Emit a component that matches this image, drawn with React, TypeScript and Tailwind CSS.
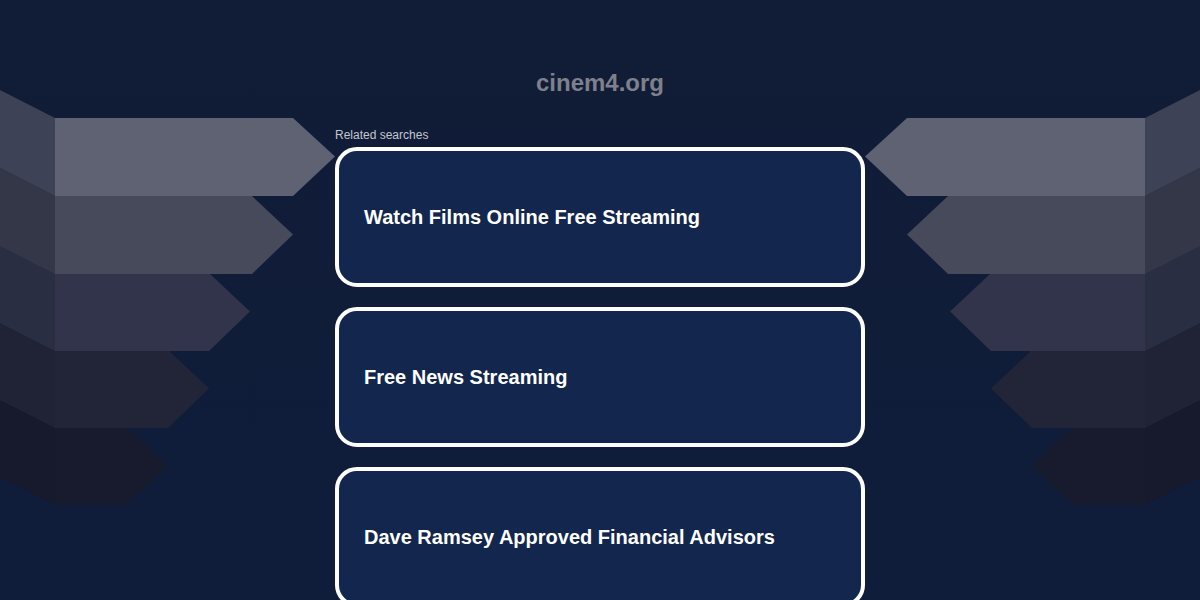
const searches = [
  "Watch Films Online Free Streaming",
  "Free News Streaming",
  "Dave Ramsey Approved Financial Advisors",
];

// arrow bands drawn on the left, mirrored on the right
const bands = [
  { top: 118, rect: 293, tip: 335, fill: "#5f6272", face: "#3e4256" },
  { top: 196, rect: 252, tip: 293, fill: "#474a5b", face: "#333748" },
  { top: 273, rect: 209, tip: 250, fill: "#31344a", face: "#2a2e42" },
  { top: 350, rect: 168, tip: 209, fill: "#222538", face: "#1f2335" },
  { top: 427, rect: 127, tip: 168, fill: "#181b2d", face: "#171a2c" },
];
const H = 77;

function Bands() {
  // draw bottom bands first so each upper band overlaps the seam
  return (
    <g>
      {[...bands].reverse().map((b) => (
        <g key={b.top}>
          <polygon
            points={`0,${b.top - 28} 55,${b.top} 55,${b.top + H + 1} 0,${b.top + H - 27}`}
            fill={b.face}
          />
          <polygon
            points={`55,${b.top} ${b.rect},${b.top} ${b.tip},${b.top + H / 2} ${b.rect},${b.top + H + 1} 55,${b.top + H + 1}`}
            fill={b.fill}
          />
        </g>
      ))}
    </g>
  );
}

function Backdrop() {
  return (
    <svg
      className="absolute inset-0 pointer-events-none"
      width="1200"
      height="600"
      viewBox="0 0 1200 600"
    >
      <defs>
        <linearGradient id="bg" x1="0" y1="0" x2="0" y2="1">
          <stop offset="0" stopColor="#111c36" />
          <stop offset="1" stopColor="#0f1d3b" />
        </linearGradient>
      </defs>
      <rect width="1200" height="600" fill="url(#bg)" />
      <Bands />
      <g transform="translate(1200,0) scale(-1,1)">
        <Bands />
      </g>
    </svg>
  );
}

export default function App() {
  return (
    <div
      className="relative h-[600px] w-full overflow-hidden bg-[#111c36]"
      style={{ fontFamily: '"Liberation Sans", Arial, sans-serif' }}
    >
      <Backdrop />

      <div className="relative flex flex-col items-center pt-[67px]">
        <h1 className="text-2xl font-bold leading-8 text-[#7e818c]">cinem4.org</h1>

        <div className="mt-[28px] w-[530px]">
          <p className="text-xs leading-4 text-[#c3c6cd]">Related searches</p>
          <div className="mt-1 flex flex-col gap-5">
            {searches.map((s) => (
              <a
                key={s}
                href="#"
                className="flex h-[140px] items-center rounded-[22px] border-4 border-white bg-[#12264e] px-[25px]"
              >
                <span className="text-xl font-bold text-white">{s}</span>
              </a>
            ))}
          </div>
        </div>
      </div>
    </div>
  );
}
